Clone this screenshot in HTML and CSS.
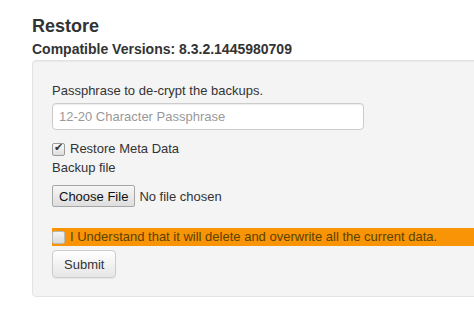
FILE: index.html
```html
<!DOCTYPE html>
<html lang="en">
<head>
    <meta charset="UTF-8">
    <meta name="viewport" content="width=device-width, initial-scale=1.0">
    <title>Restore</title>
    <link rel="stylesheet" href="styles.css">
</head>
<body>
    <div class="page">
        <h3>Restore</h3>
        <h5>Compatible Versions: 8.3.2.1445980709</h5>

        <!-- Restore form -->
        <form class="well" id="restoreForm">
            <label for="passphrase">Passphrase to de-crypt the backups.</label>
            <input type="text" id="passphrase" class="text-input" placeholder="12-20 Character Passphrase">

            <label class="check-row">
                <input type="checkbox" class="check" checked> Restore Meta Data
            </label>

            <label for="backupFile" class="file-label">Backup file</label>
            <input type="file" id="backupFile" class="file-input">

            <label class="check-row warning">
                <input type="checkbox" class="check"> I Understand that it will delete and overwrite all the current data.
            </label>

            <button type="submit" class="btn">Submit</button>
        </form>
    </div>
</body>
</html>
```

FILE: styles.css
```css
html, body {
    margin: 0;
    overflow: hidden;
    background-color: #fff;
}
body {
    font-family: "Liberation Sans", Arial, sans-serif;
    font-size: 13px;
    line-height: 18px;
    color: #333;
}
.page {
    padding: 15px 0 0 32px;
}
h3 {
    margin: 0;
    font-size: 18px;
    line-height: 22px;
    font-weight: bold;
}
h5 {
    margin: 2px 0 1px;
    font-size: 14px;
    line-height: 20px;
    font-weight: bold;
}
.well {
    width: 500px;
    padding: 21px 19px 18px;
    background-color: #f4f4f4;
    border: 1px solid #e3e3e3;
    border-radius: 4px;
    box-shadow: inset 0 1px 1px rgba(0, 0, 0, 0.05);
    display: flex;
    flex-direction: column;
    align-items: flex-start;
}
label {
    display: block;
}
.text-input {
    box-sizing: border-box;
    width: 312px;
    height: 27px;
    margin: 3px 0 10px;
    padding: 4px 6px;
    font-family: inherit;
    font-size: 13px;
    color: #555;
    background-color: #fff;
    border: 1px solid #ccc;
    border-radius: 4px;
    box-shadow: inset 0 1px 1px rgba(0, 0, 0, 0.075);
}
.text-input::placeholder {
    color: #999;
}
.check-row {
    display: flex;
    align-items: center;
    gap: 5px;
}
.check {
    appearance: none;
    position: relative;
    width: 13px;
    height: 13px;
    margin: 0;
    border: 1px solid #9a9a9a;
    border-radius: 2px;
    background: linear-gradient(#fdfdfd, #dcdcdc);
}
.check:checked::after {
    content: "\2714";
    position: absolute;
    left: 1px;
    top: -3px;
    font-size: 11px;
    color: #333;
}
.file-label {
    margin-top: 1px;
}
.file-input {
    height: 22px;
    margin: 8px 0 21px;
    font-family: inherit;
    font-size: 13px;
    line-height: 16px;
    color: #333;
}
.file-input::file-selector-button {
    height: 22px;
    margin-right: 4px;
    padding: 0 6px;
    font-family: inherit;
    font-size: 13px;
    color: #111;
    background: linear-gradient(#f6f6f6, #dedede);
    border: 1px solid #a6a6a6;
    border-radius: 2px;
}
.warning {
    align-self: stretch;
    height: 18px;
    background-color: #f89406;
    color: #5a4300;
}
.warning .check {
    border-color: #bbb;
    background: linear-gradient(#f4f4f4, #dadada);
}
.btn {
    margin-top: 4px;
    height: 28px;
    padding: 0 11px;
    font-family: inherit;
    font-size: 13px;
    color: #333;
    background: linear-gradient(#fff, #e6e6e6);
    border: 1px solid #ccc;
    border-radius: 4px;
    box-shadow: 0 1px 1px rgba(0, 0, 0, 0.05);
    cursor: pointer;
}
```
